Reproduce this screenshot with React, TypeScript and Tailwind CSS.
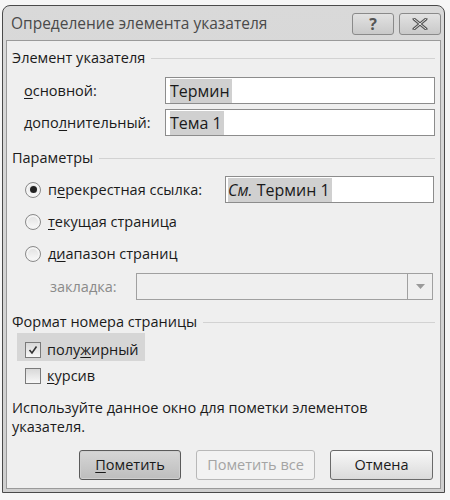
import React from "react";

const F = { fontFamily: '"Open Sans", "Noto Sans", "DejaVu Sans", sans-serif' };

function U({ children }: { children: React.ReactNode }) {
  return <span className="underline underline-offset-2 decoration-1">{children}</span>;
}

function Section({ title }: { title: string }) {
  return (
    <div className="flex items-center gap-[6px] pr-[5px] h-[20px]">
      <span className="text-[#1a1a1a] whitespace-nowrap">{title}</span>
      <div className="flex-1 h-px bg-[#d2d2d2]" />
    </div>
  );
}

function Radio({ checked }: { checked?: boolean }) {
  return (
    <span className="w-[16px] h-[16px] rounded-full border border-[#8a8a8a] bg-gradient-to-b from-[#e0e0e0] to-[#fafafa] flex items-center justify-center shrink-0 shadow-[inset_0_0_0_2px_#f4f4f4]">
      {checked && <span className="w-[7px] h-[7px] rounded-full bg-[#222]" />}
    </span>
  );
}

function Check({ checked }: { checked?: boolean }) {
  return (
    <span className="w-[16px] h-[16px] border border-[#7a7a7a] bg-gradient-to-b from-[#d8d8d8] to-[#f8f8f8] flex items-center justify-center shrink-0">
      {checked && (
        <svg width="12" height="12" viewBox="0 0 12 12">
          <path d="M2.5 6 L5 9 L9.5 2.5" stroke="#333" strokeWidth="1.6" fill="none" />
        </svg>
      )}
    </span>
  );
}

export default function App() {
  return (
    <div className="w-[450px] h-[500px] bg-[#f6f6f6] pt-[5px] pl-[2px]" style={F}>
      <div className="w-[443px] h-[488px] border border-[#4a4a4a] rounded-t-[8px] bg-gradient-to-b from-[#d9d9d9] to-[#cfcfcf] flex flex-col">
        {/* title bar */}
        <div className="h-[34px] flex items-center pl-[8px] pr-[3px] shrink-0">
          <span className="text-[15.5px] text-[#4a4a4a] flex-1 pt-[2px]">Определение элемента указателя</span>
          <div className="flex gap-[5px] mt-[2px]">
            <div className="w-[42px] h-[22px] border border-[#8a8a8a] rounded-[3px] bg-gradient-to-b from-[#e2e2e2] to-[#c9c9c9] flex items-center justify-center text-[16px] font-bold text-[#555] leading-none">?</div>
            <div className="w-[42px] h-[22px] border border-[#8a8a8a] rounded-[3px] bg-gradient-to-b from-[#e2e2e2] to-[#c9c9c9] flex items-center justify-center">
              <svg width="16" height="12" viewBox="0 0 16 12">
                <path d="M2 1 L14 11 M14 1 L2 11" stroke="#555" strokeWidth="3" strokeLinecap="round" />
                <path d="M2 1 L14 11 M14 1 L2 11" stroke="#e8e8e8" strokeWidth="1" strokeLinecap="round" />
              </svg>
            </div>
          </div>
        </div>
        {/* content */}
        <div className="flex-1 mx-[3px] mb-[3px] border border-[#9a9a9a] bg-[#efefef] flex flex-col pl-[5px] text-[14.5px] text-[#1a1a1a]">
          <div className="mt-[7px]">
            <Section title="Элемент указателя" />
          </div>
          <div className="mt-[9px] flex items-center h-[27px]">
            <span className="w-[153px] pl-[12px] whitespace-nowrap"><U>о</U>сновной:</span>
            <div className="w-[270px] h-[27px] border border-[#8c8c8c] bg-white flex items-center pl-[4px] text-[16px]">
              <span className="bg-[#d0d0d0] pr-[2px]">Термин</span>
            </div>
          </div>
          <div className="mt-[5px] flex items-center h-[27px]">
            <span className="w-[153px] pl-[12px] whitespace-nowrap">допо<U>л</U>нительный:</span>
            <div className="w-[270px] h-[27px] border border-[#8c8c8c] bg-white flex items-center pl-[4px] text-[16px]">
              <span className="bg-[#d0d0d0] pr-[2px]">Тема 1</span>
            </div>
          </div>
          <div className="mt-[12px]">
            <Section title="Параметры" />
          </div>
          <div className="mt-[8px] flex items-center h-[27px]">
            <div className="w-[213px] pl-[13px] flex items-center gap-[7px] whitespace-nowrap">
              <Radio checked />
              <span>п<U>е</U>рекрестная ссылка:</span>
            </div>
            <div className="w-[209px] h-[27px] border border-[#8c8c8c] bg-white flex items-center pl-[2px] text-[16px]">
              <span className="bg-[#d0d0d0] pr-[2px]"><i>См.</i> Термин 1</span>
            </div>
          </div>
          <div className="mt-[5px] flex items-center h-[27px] pl-[13px] gap-[7px]">
            <Radio />
            <span><U>т</U>екущая страница</span>
          </div>
          <div className="mt-[5px] flex items-center h-[27px] pl-[13px] gap-[7px]">
            <Radio />
            <span>д<U>и</U>апазон страниц</span>
          </div>
          <div className="mt-[6px] flex items-center h-[27px]">
            <span className="w-[124px] pl-[38px] text-[#8a8a8a]">закладка:</span>
            <div className="w-[297px] h-[27px] border border-[#a0a0a0] bg-[#efefef] flex justify-end">
              <div className="w-[25px] h-full border-l border-[#a0a0a0] flex items-center justify-center">
                <svg width="9" height="5" viewBox="0 0 9 5"><path d="M0 0 L9 0 L4.5 5 Z" fill="#9a9a9a" /></svg>
              </div>
            </div>
          </div>
          <div className="mt-[12px]">
            <Section title="Формат номера страницы" />
          </div>
          <div className="mt-[1px] h-[28px] flex">
            <div className="ml-[5px] w-[128px] h-[28px] bg-[#d6d6d6] flex items-center gap-[6px] pl-[8px] pt-[5px]">
              <Check checked />
              <span>полу<U>ж</U>ирный</span>
            </div>
          </div>
          <div className="mt-[3px] h-[24px] flex items-center pl-[13px] gap-[6px]">
            <Check />
            <span><U>к</U>урсив</span>
          </div>
          <div className="mt-[10px] leading-[19px] pr-[20px]">
            Используйте данное окно для пометки элементов указателя.
          </div>
          <div className="mt-[14px] flex gap-[15px] pl-[67px]">
            <div className="w-[102px] h-[30px] border border-[#5a5a5a] rounded-[3px] bg-gradient-to-b from-[#d6d6d6] to-[#bdbdbd] flex items-center justify-center shadow-[inset_0_0_0_1px_#cfcfcf]">
              <span><U>П</U>ометить</span>
            </div>
            <div className="w-[119px] h-[30px] border border-[#b8b8b8] rounded-[3px] bg-[#f2f2f2] flex items-center justify-center text-[#a4a4a4]">
              Пометить все
            </div>
            <div className="w-[103px] h-[30px] border border-[#6a6a6a] rounded-[3px] bg-gradient-to-b from-[#f8f8f8] to-[#dadada] flex items-center justify-center">
              Отмена
            </div>
          </div>
        </div>
      </div>
    </div>
  );
}
